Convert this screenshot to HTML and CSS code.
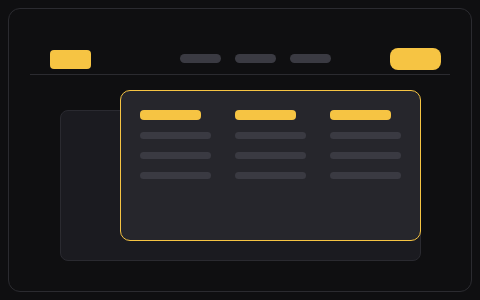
FILE: index.html
```html
<!DOCTYPE html>
<html lang="en">
<head>
  <meta charset="UTF-8" />
  <meta name="viewport" content="width=device-width, initial-scale=1.0" />
  <title>Dropdown Menu Preview</title>
  <link rel="stylesheet" href="styles.css">
</head>
<body>
  <div class="frame">
    <!-- Header bar with logo, nav and call-to-action -->
    <header class="header">
      <div class="logo"></div>
      <nav class="nav">
        <span class="nav-item"></span>
        <span class="nav-item"></span>
        <span class="nav-item"></span>
      </nav>
      <div class="cta"></div>
    </header>
    <div class="divider"></div>
    <!-- Stacked cards: the mega menu sits over the page card -->
    <main class="stage">
      <div class="card-back"></div>
      <div class="card-front">
        <div class="column">
          <span class="col-title"></span>
          <span class="col-line"></span>
          <span class="col-line"></span>
          <span class="col-line"></span>
        </div>
        <div class="column">
          <span class="col-title"></span>
          <span class="col-line"></span>
          <span class="col-line"></span>
          <span class="col-line"></span>
        </div>
        <div class="column">
          <span class="col-title"></span>
          <span class="col-line"></span>
          <span class="col-line"></span>
          <span class="col-line"></span>
        </div>
      </div>
    </main>
  </div>
</body>
</html>
```

FILE: styles.css
```css
:root {
  --bg: #0f0f11;
  --line: #2b2b30;
  --pill: #3a3a42;
  --yellow: #f6c443;
}
* {
  margin: 0;
  padding: 0;
  box-sizing: border-box;
}
html, body {
  background: var(--bg);
}
body {
  padding: 8px;
  font-family: "Liberation Sans", Arial, sans-serif;
  overflow: hidden;
}
.frame {
  width: 464px;
  height: 284px;
  border: 1px solid var(--line);
  border-radius: 12px;
  padding: 39px 21px 0 21px;
}
/* Header */
.header {
  display: flex;
  align-items: center;
  height: 22px;
  padding: 0 9px 0 20px;
}
.logo {
  width: 41px;
  height: 19px;
  background: var(--yellow);
  border-radius: 4px;
}
.nav {
  display: flex;
  gap: 14px;
  margin-left: 89px;
  margin-top: -1px;
}
.nav-item {
  display: block;
  width: 41px;
  height: 9px;
  background: var(--pill);
  border-radius: 5px;
}
.cta {
  width: 51px;
  height: 22px;
  margin-left: auto;
  background: var(--yellow);
  border-radius: 8px;
}
.divider {
  height: 1px;
  margin-top: 4px;
  background: var(--line);
}
/* Stage with overlapping cards */
.stage {
  display: grid;
  width: 361px;
  margin: 15px 0 0 30px;
}
.card-back,
.card-front {
  grid-area: 1 / 1;
}
.card-back {
  margin-top: 20px;
  height: 151px;
  background: #1b1b20;
  border: 1px solid #2a2a30;
  border-radius: 8px;
}
.card-front {
  justify-self: start;
  margin-left: 60px;
  width: 301px;
  height: 151px;
  background: #26262c;
  border: 1px solid var(--yellow);
  border-radius: 10px;
  padding: 19px;
  display: flex;
  gap: 24px;
}
.column {
  display: flex;
  flex-direction: column;
  width: 71px;
}
.col-title {
  display: block;
  width: 61px;
  height: 10px;
  background: var(--yellow);
  border-radius: 4px;
  margin-bottom: 12px;
}
.col-line {
  display: block;
  width: 71px;
  height: 7px;
  background: var(--pill);
  border-radius: 4px;
  margin-bottom: 13px;
}
```
